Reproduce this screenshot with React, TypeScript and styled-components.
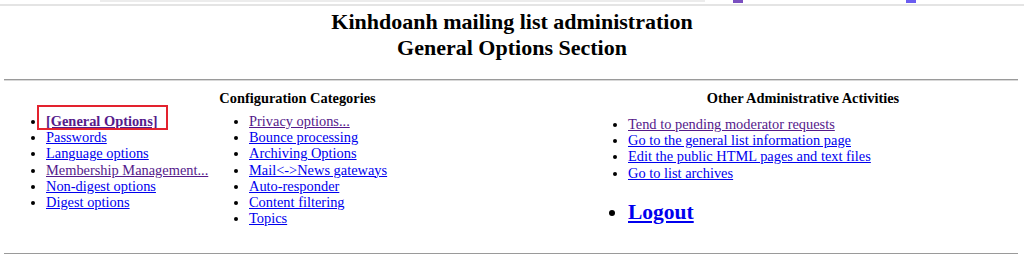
import styled, { createGlobalStyle } from "styled-components";

const GlobalStyle = createGlobalStyle`
  html, body {
    margin: 0;
    padding: 0;
    background: #ffffff;
  }
  body {
    font-family: "Liberation Serif", "Times New Roman", serif;
    font-size: 14.4px;
    line-height: 16px;
    color: #000000;
  }
`;

const Page = styled.div`
  width: 1024px;
  height: 254px;
  overflow: hidden;
`;

const TopStrip = styled.div`
  position: relative;
  height: 4px;
  border-bottom: 2px solid #e4e4e4;
`;

// leftovers of the section above the crop line
const StripPiece = styled.span<{ left: number; width: number; color: string; h: number }>`
  position: absolute;
  top: 0;
  left: ${({ left }) => left}px;
  width: ${({ width }) => width}px;
  height: ${({ h }) => h}px;
  background: ${({ color }) => color};
`;

const Title = styled.h2`
  margin: 3px 0 0;
  text-align: center;
  font-size: 22px;
  line-height: 26px;
  font-weight: bold;
`;

const Rule = styled.hr`
  margin: 18px 6px 0 4px;
  height: 0;
  border: none;
  border-top: 1px solid #9a9a9a;
  border-bottom: 1px solid #d8d8d8;
`;

const Sections = styled.div`
  display: grid;
  grid-template-columns: 575px 1fr;
  column-gap: 3px;
  padding: 9px 6px 0 10px;
`;

const Section = styled.div`
  display: flex;
  flex-direction: column;
`;

const SectionTitle = styled.div`
  text-align: center;
  font-weight: bold;
  line-height: 16px;
`;

const Columns = styled.div`
  display: grid;
  grid-template-columns: 203px 1fr;
  margin-top: 7px;
`;

const List = styled.ul<{ offset?: number; indent?: number }>`
  margin: ${({ offset }) => offset ?? 0}px 0 0;
  padding-left: ${({ indent }) => indent ?? 36}px;
  list-style: disc;
`;

const Item = styled.li<{ big?: boolean }>`
  line-height: 16.2px;
  ${({ big }) =>
    big &&
    `
    margin-top: 19px;
    font-size: 21.5px;
    line-height: 24px;
    font-weight: bold;
  `}
`;

const Anchor = styled.a<{ visited?: boolean }>`
  color: ${({ visited }) => (visited ? "#551a8b" : "#0000ee")};
  text-decoration: underline;
`;

// current page marker with the red annotation frame drawn over it
const Current = styled.span`
  position: relative;
  font-weight: bold;

  &::after {
    content: "";
    position: absolute;
    top: -8px;
    bottom: -1px;
    left: -9px;
    right: -10px;
    border: 2px solid #e3222e;
    pointer-events: none;
  }
`;

const BottomRule = styled(Rule)`
  margin-top: 27px;
`;

type Link = { label: string; visited?: boolean };

const firstColumn: Link[] = [
  { label: "Passwords" },
  { label: "Language options" },
  { label: "Membership Management...", visited: true },
  { label: "Non-digest options" },
  { label: "Digest options" },
];

const secondColumn: Link[] = [
  { label: "Privacy options...", visited: true },
  { label: "Bounce processing" },
  { label: "Archiving Options" },
  { label: "Mail<->News gateways" },
  { label: "Auto-responder" },
  { label: "Content filtering" },
  { label: "Topics" },
];

const otherActivities: Link[] = [
  { label: "Tend to pending moderator requests", visited: true },
  { label: "Go to the general list information page" },
  { label: "Edit the public HTML pages and text files" },
  { label: "Go to list archives" },
];

const App = () => {
  return (
    <Page>
      <GlobalStyle />
      <TopStrip>
        <StripPiece left={100} width={605} color="#ececec" h={2} />
        <StripPiece left={733} width={10} color="#7a4fc0" h={3} />
        <StripPiece left={906} width={10} color="#6a5cf0" h={3} />
      </TopStrip>
      <Title>
        Kinhdoanh mailing list administration
        <br />
        General Options Section
      </Title>
      <Rule />
      <Sections>
        <Section>
          <SectionTitle>Configuration Categories</SectionTitle>
          <Columns>
            <List>
              <Item>
                <Current>
                  <Anchor href="#" visited>
                    [General Options]
                  </Anchor>
                </Current>
              </Item>
              {firstColumn.map((link) => (
                <Item key={link.label}>
                  <Anchor href="#" visited={link.visited}>
                    {link.label}
                  </Anchor>
                </Item>
              ))}
            </List>
            <List>
              {secondColumn.map((link) => (
                <Item key={link.label}>
                  <Anchor href="#" visited={link.visited}>
                    {link.label}
                  </Anchor>
                </Item>
              ))}
            </List>
          </Columns>
        </Section>
        <Section>
          <SectionTitle>Other Administrative Activities</SectionTitle>
          <List offset={10} indent={40}>
            {otherActivities.map((link) => (
              <Item key={link.label}>
                <Anchor href="#" visited={link.visited}>
                  {link.label}
                </Anchor>
              </Item>
            ))}
            <Item big>
              <Anchor href="#">Logout</Anchor>
            </Item>
          </List>
        </Section>
      </Sections>
      <BottomRule />
    </Page>
  );
};

export default App;
